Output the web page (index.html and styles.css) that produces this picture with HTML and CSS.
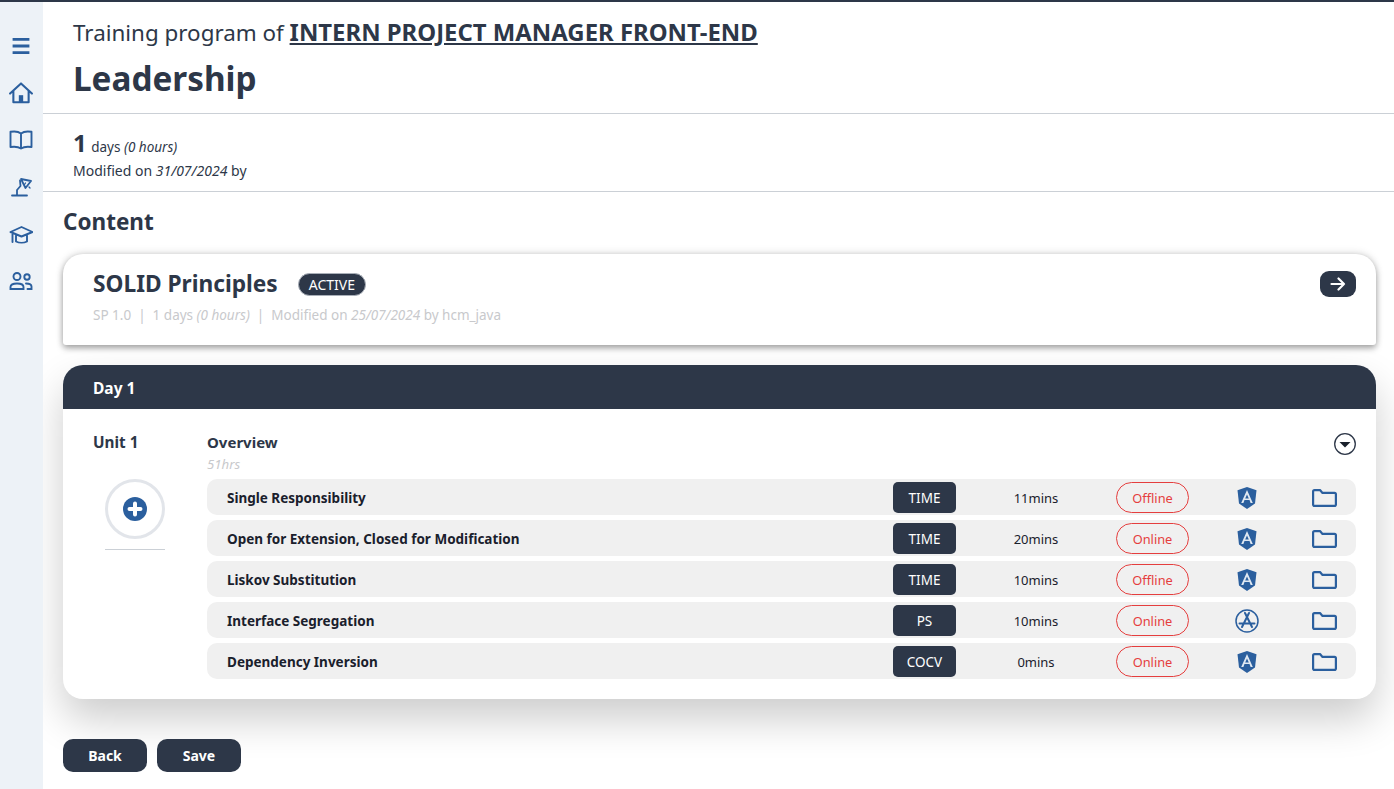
FILE: index.html
```html
<!DOCTYPE html>
<html lang="en">

<head>
    <meta charset="UTF-8">
    <meta name="viewport" content="width=device-width, initial-scale=1.0">
    <title>Leadership</title>
    <link rel="stylesheet" href="styles.css">
</head>

<body>
    <svg class="icon-defs" width="0" height="0">
        <symbol id="angular" viewBox="0 0 20 22">
            <path fill="#2b5f9e" d="M10 0 19.5 3.3 18 16.6 10 22 2 16.6 .5 3.3z" />
            <path fill="#dfe8f2" d="M10 3 4.2 16h2.2l1.1-2.9h5l1.1 2.9h2.2L10 3zm0 4.6 1.8 3.9H8.2L10 7.6z" />
        </symbol>
        <symbol id="appstore" viewBox="0 0 24 24">
            <g fill="none" stroke="#2b5f9e">
                <circle cx="12" cy="12" r="11" stroke-width="1.5" />
                <path stroke-width="2" stroke-linecap="round" d="M10 4 17 18M14 4 7 18M4.500 14.500h15" />
            </g>
        </symbol>
        <symbol id="folder" viewBox="0 0 25 18">
            <path fill="none" stroke="#2b5f9e" stroke-width="2.200" stroke-linejoin="round"
                d="M1.100 2.500a1.400 1.400 0 0 1 1.400-1.400h5.500l2.500 2.800h12a1.400 1.400 0 0 1 1.400 1.400v10a1.400 1.400 0 0 1-1.400 1.600H2.500a1.400 1.400 0 0 1-1.400-1.600z" />
        </symbol>
    </svg>

    <div class="layout">
        <nav class="sidebar">
            <svg class="nav-icon" viewBox="0 0 20 20">
                <path fill="none" stroke="#2b5f9e" stroke-width="2.400" d="M3 4.500h14M3 10h14M3 15.500h14" />
            </svg>
            <svg class="nav-icon" viewBox="0 0 22 20">
                <path fill="none" stroke="#2b5f9e" stroke-width="1.900" stroke-linejoin="round" stroke-linecap="round"
                    d="M1 10.500 11 1.200l10 9.300M4 8v10.500h14V8" />
                <path fill="#2b5f9e" d="M9 12h4v6.500H9z" />
            </svg>
            <svg class="nav-icon" viewBox="0 0 24 20">
                <path fill="none" stroke="#2b5f9e" stroke-width="1.900" stroke-linejoin="round"
                    d="M12 3.500C9.500 1.500 5 1.200 1.500 1.800V17C5 16.500 9.500 16.800 12 18.500 14.500 16.800 19 16.500 22.500 17V1.800C19 1.200 14.500 1.500 12 3.500zM12 3.500v15" />
            </svg>
            <svg class="nav-icon" viewBox="0 0 24 24">
                <g fill="none" stroke="#2b5f9e" stroke-linecap="round" stroke-linejoin="round">
                    <path stroke-width="1.800" d="M3 20.500h15M8 20.500V15l3.500-4L11 5.500" />
                    <path stroke-width="1.800" d="M12 4 22 6l-5.500 7z" />
                    <path stroke-width="1.300" d="M16.500 8l-1 1.500M20 12l1 1" />
                </g>
            </svg>
            <svg class="nav-icon" viewBox="0 0 24 24">
                <path fill="none" stroke="#2b5f9e" stroke-width="1.900" stroke-linejoin="round" stroke-linecap="round"
                    d="M12.500 5 1.500 10 12.500 14.500 23.500 10zM7 13v6.500c3 1.500 8 1.500 11 0V13M3.500 11v9" />
            </svg>
            <svg class="nav-icon" viewBox="0 0 24 20">
                <g fill="none" stroke="#2b5f9e" stroke-width="1.900" stroke-linecap="round">
                    <circle cx="8" cy="5.500" r="3.500" />
                    <circle cx="18" cy="6" r="2.700" />
                    <path d="M1.500 18v-2c0-2.500 2-3.500 6.500-3.500s6.500 1 6.500 3.500v2zM17 12.500c3.500 0 5.500 1 5.500 3v2.500h-4" />
                </g>
            </svg>
        </nav>

        <main class="main">
            <header class="page-head">
                <p class="program">Training program of <a href="#">INTERN PROJECT MANAGER FRONT-END</a></p>
                <h1>Leadership</h1>
            </header>

            <section class="meta">
                <p class="duration"><b>1</b> days <i>(0 hours)</i></p>
                <p class="modified">Modified on <i>31/07/2024</i> by</p>
            </section>

            <section class="content">
                <h2>Content</h2>

                <div class="course-card">
                    <div class="course-text">
                        <div class="course-title">
                            <h3>SOLID Principles</h3>
                            <span class="status">ACTIVE</span>
                        </div>
                        <p class="course-info">SP 1.0<span class="sep">|</span>1 days <i>(0 hours)</i><span class="sep">|</span>Modified on <i>25/07/2024</i> by hcm_java</p>
                    </div>
                    <button class="go-btn">
                        <svg width="16" height="14" viewBox="0 0 16 14">
                            <path fill="none" stroke="#fff" stroke-width="2.200" stroke-linecap="round" stroke-linejoin="round"
                                d="M1.500 7h12.500M8.500 1.500 14 7l-5.500 5.500" />
                        </svg>
                    </button>
                </div>

                <div class="day-panel">
                    <div class="day-head">Day 1</div>
                    <div class="day-body">
                        <div class="unit-col">
                            <div class="unit-name">Unit 1</div>
                            <div class="add-ring">
                                <svg width="24" height="24" viewBox="0 0 24 24">
                                    <circle cx="12" cy="12" r="12" fill="#2b5f9e" />
                                    <path stroke="#fff" stroke-width="4" stroke-linecap="round" d="M12 6.500v11M6.500 12h11" />
                                </svg>
                            </div>
                            <div class="unit-line"></div>
                        </div>

                        <div class="lessons">
                            <div class="lessons-head">
                                <div>
                                    <div class="lessons-title">Overview</div>
                                    <div class="lessons-hours">51hrs</div>
                                </div>
                                <button class="toggle">
                                    <svg width="22" height="22" viewBox="0 0 22 22">
                                        <circle cx="11" cy="11" r="10.300" fill="none" stroke="#2d3748" stroke-width="1.300" />
                                        <path fill="#1a202c" d="M5.500 9h11L11 14.500z" />
                                    </svg>
                                </button>
                            </div>

                            <div class="row">
                                <span class="row-title">Single Responsibility</span>
                                <span class="type">TIME</span>
                                <span class="mins">11mins</span>
                                <span class="mode">Offline</span>
                                <span class="tech"><svg width="20" height="22"><use href="#angular" /></svg></span>
                                <span class="files"><svg width="25" height="18"><use href="#folder" /></svg></span>
                            </div>
                            <div class="row">
                                <span class="row-title">Open for Extension, Closed for Modification</span>
                                <span class="type">TIME</span>
                                <span class="mins">20mins</span>
                                <span class="mode">Online</span>
                                <span class="tech"><svg width="20" height="22"><use href="#angular" /></svg></span>
                                <span class="files"><svg width="25" height="18"><use href="#folder" /></svg></span>
                            </div>
                            <div class="row">
                                <span class="row-title">Liskov Substitution</span>
                                <span class="type">TIME</span>
                                <span class="mins">10mins</span>
                                <span class="mode">Offline</span>
                                <span class="tech"><svg width="20" height="22"><use href="#angular" /></svg></span>
                                <span class="files"><svg width="25" height="18"><use href="#folder" /></svg></span>
                            </div>
                            <div class="row">
                                <span class="row-title">Interface Segregation</span>
                                <span class="type">PS</span>
                                <span class="mins">10mins</span>
                                <span class="mode">Online</span>
                                <span class="tech"><svg width="24" height="24"><use href="#appstore" /></svg></span>
                                <span class="files"><svg width="25" height="18"><use href="#folder" /></svg></span>
                            </div>
                            <div class="row">
                                <span class="row-title">Dependency Inversion</span>
                                <span class="type">COCV</span>
                                <span class="mins">0mins</span>
                                <span class="mode">Online</span>
                                <span class="tech"><svg width="20" height="22"><use href="#angular" /></svg></span>
                                <span class="files"><svg width="25" height="18"><use href="#folder" /></svg></span>
                            </div>
                        </div>
                    </div>
                </div>

                <div class="actions">
                    <button class="action-btn">Back</button>
                    <button class="action-btn">Save</button>
                </div>
            </section>
        </main>
    </div>
</body>

</html>
```

FILE: styles.css
```css
* {
    box-sizing: border-box;
}

body {
    margin: 0;
    height: 789px;
    overflow: hidden;
    font-family: "Noto Sans", "Open Sans", sans-serif;
    color: #2d3748;
    background-color: #fff;
    border-top: 2px solid #2d3748;
}

p,
h1,
h2,
h3 {
    margin: 0;
}

button {
    font-family: inherit;
    border: none;
    cursor: pointer;
}

.icon-defs {
    position: absolute;
}

.layout {
    display: flex;
    height: 787px;
}

.sidebar {
    position: relative;
    z-index: 1;
    flex: 0 0 43px;
    display: flex;
    flex-direction: column;
    align-items: center;
    gap: 23px;
    padding-top: 32px;
    background-color: #edf2f7;
}

.nav-icon {
    width: 24px;
    height: 24px;
    margin-right: 1px;
}

.main {
    flex: 1;
    min-width: 0;
}

.page-head {
    height: 112px;
    padding: 14px 0 0 30px;
    border-bottom: 1px solid #cbd0d6;
}

.program {
    font-size: 22.4px;
    line-height: 32px;
}

.program a {
    font-size: 23.9px;
    font-weight: 700;
    color: #2d3748;
}

h1 {
    margin-top: 7px;
    font-size: 33.3px;
    line-height: 44px;
    font-weight: 700;
}

.meta {
    height: 78px;
    padding: 14px 0 0 30px;
    border-bottom: 1px solid #cbd0d6;
}

.duration {
    font-size: 13.5px;
    line-height: 30px;
}

.duration b {
    font-size: 24px;
    margin-right: 1px;
}

.modified {
    font-size: 14px;
    line-height: 18px;
}

.content {
    padding: 0 18px 0 20px;
}

h2 {
    margin-top: 13px;
    font-size: 22.5px;
    line-height: 34px;
    font-weight: 700;
}

.course-card {
    display: flex;
    justify-content: space-between;
    height: 91px;
    margin-top: 15px;
    padding: 14px 20px 0 30px;
    background-color: #fff;
    border-radius: 20px 20px 3px 3px;
    box-shadow: 0 3px 6px rgba(0, 0, 0, 0.35), 0 -1px 8px rgba(0, 0, 0, 0.12);
}

.course-title {
    display: flex;
    align-items: center;
    gap: 20px;
}

h3 {
    font-size: 22.7px;
    line-height: 32px;
    font-weight: 700;
}

.status {
    padding: 0 10px;
    font-size: 14px;
    line-height: 21px;
    color: #fff;
    background-color: #2d3748;
    border: 1px solid #a9afb8;
    border-radius: 12px;
}

.course-info {
    margin-top: 5px;
    font-size: 13.5px;
    line-height: 20px;
    color: #c8c9cc;
}

.sep {
    margin: 0 7px;
}

.go-btn {
    display: flex;
    align-items: center;
    justify-content: center;
    width: 36px;
    height: 26px;
    margin-top: 3px;
    background-color: #2d3748;
    border-radius: 9px;
}

.day-panel {
    margin-top: 20px;
    height: 334px;
    background-color: #fff;
    border-radius: 20px;
    box-shadow: 0 20px 40px rgba(0, 0, 0, 0.2);
}

.day-head {
    height: 44px;
    padding-left: 30px;
    font-size: 15.5px;
    font-weight: 700;
    line-height: 47px;
    color: #fff;
    background-color: #2d3748;
    border-radius: 20px 20px 0 0;
}

.day-body {
    display: flex;
    padding: 22px 20px 0 30px;
}

.unit-col {
    flex: 0 0 114px;
}

.unit-name {
    font-size: 15.3px;
    font-weight: 700;
    line-height: 22px;
}

.add-ring {
    display: flex;
    align-items: center;
    justify-content: center;
    width: 60px;
    height: 60px;
    margin: 26px 0 0 12px;
    border: 3px solid #e2e5ea;
    border-radius: 50%;
}

.unit-line {
    width: 60px;
    margin: 10px 0 0 12px;
    border-top: 1px solid #cbd0d6;
}

.lessons {
    flex: 1;
    min-width: 0;
}

.lessons-head {
    display: flex;
    justify-content: space-between;
    height: 48px;
}

.lessons-title {
    font-size: 15px;
    font-weight: 700;
    line-height: 22px;
}

.lessons-hours {
    margin-top: 1px;
    font-size: 13.2px;
    font-style: italic;
    line-height: 20px;
    color: #c8c9cc;
}

.toggle {
    display: flex;
    width: 22px;
    height: 22px;
    padding: 0;
    margin-top: 2px;
    background: none;
}

.row {
    display: flex;
    align-items: center;
    height: 36px;
    margin-bottom: 5px;
    padding: 0 13px 0 20px;
    background-color: #f0f0f0;
    border-radius: 10px;
}

.row-title {
    flex: 1;
    padding-top: 2px;
    font-size: 13.5px;
    font-weight: 700;
    color: #1a202c;
}

.type {
    flex: 0 0 63px;
    height: 31px;
    padding-top: 1px;
    font-size: 13.5px;
    line-height: 30px;
    text-align: center;
    color: #fff;
    background-color: #2d3748;
    border-radius: 5px;
}

.mins {
    flex: 0 0 160px;
    padding-top: 2px;
    font-size: 13px;
    text-align: center;
    color: #1a202c;
}

.mode {
    flex: 0 0 73px;
    height: 31px;
    padding-top: 2px;
    font-size: 12.8px;
    line-height: 27px;
    text-align: center;
    color: #e53e3e;
    border: 1px solid #e53e3e;
    border-radius: 16px;
}

.tech {
    flex: 0 0 116px;
    display: flex;
    justify-content: center;
    padding-top: 1px;
}

.files {
    flex: 0 0 38px;
    display: flex;
    justify-content: center;
    padding-top: 1px;
}

.actions {
    display: flex;
    gap: 10px;
    margin-top: 40px;
}

.action-btn {
    width: 84px;
    height: 33px;
    font-size: 14px;
    font-weight: 700;
    color: #fff;
    background-color: #2d3748;
    border-radius: 10px;
}
```
